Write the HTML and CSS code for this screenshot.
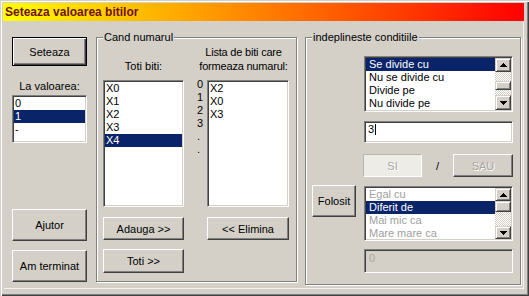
FILE: index.html
```html
<!DOCTYPE html>
<html>
<head>
<meta charset="utf-8">
<title>Seteaza valoarea bitilor</title>
<link rel="stylesheet" href="styles.css">
</head>
<body>
<div class="window">
  <div class="titlebar">Seteaza valoarea bitilor</div>
  <div class="client">
    <div class="leftcol">
      <button class="btn btn-default seteaza">Seteaza</button>
      <div class="label">La valoarea:</div>
      <div class="listbox vals">
        <div class="item">0</div>
        <div class="item sel">1</div>
        <div class="item">-</div>
      </div>
      <button class="btn ajutor">Ajutor</button>
      <button class="btn terminat">Am terminat</button>
    </div>

    <fieldset class="group group-num">
      <legend>Cand numarul</legend>
      <div class="num-grid">
        <div class="hdr hdr-all">Toti biti:</div>
        <div class="hdr hdr-list">Lista de biti care<br>formeaza numarul:</div>
        <div class="listbox bits bits-all">
          <div class="item">X0</div>
          <div class="item">X1</div>
          <div class="item">X2</div>
          <div class="item">X3</div>
          <div class="item sel">X4</div>
        </div>
        <div class="indices">0<br>1<br>2<br>3<br>.<br>.</div>
        <div class="listbox bits bits-sel">
          <div class="item">X2</div>
          <div class="item">X0</div>
          <div class="item">X3</div>
        </div>
        <button class="btn row-btn adauga">Adauga &gt;&gt;</button>
        <button class="btn row-btn elimina">&lt;&lt; Elimina</button>
        <button class="btn toti">Toti &gt;&gt;</button>
      </div>
    </fieldset>

    <fieldset class="group group-cond">
      <legend>indeplineste conditiile</legend>
      <div class="cond-grid">
        <div class="listbox scrolled list-div">
          <div class="items">
            <div class="item sel">Se divide cu</div>
            <div class="item">Nu se divide cu</div>
            <div class="item">Divide pe</div>
            <div class="item">Nu divide pe</div>
          </div>
          <div class="scrollbar sb1">
            <div class="sb-btn sb-up"><svg width="7" height="4" viewBox="0 0 7 4" shape-rendering="crispEdges"><path d="M3 0h1v1h1v1h1v1h1v1H0V3h1V2h1V1h1z"/></svg></div>
            <div class="sb-track t1"></div>
            <div class="sb-thumb th1"></div>
            <div class="sb-track t2"></div>
            <div class="sb-btn sb-down"><svg width="7" height="4" viewBox="0 0 7 4" shape-rendering="crispEdges"><path d="M0 0h7v1H6v1H5v1H4v1H3V3H2V2H1V1H0z"/></svg></div>
          </div>
        </div>
        <div class="field field-val">3<span class="caret"></span></div>
        <div class="logic">
          <button class="btn btn-toggle si" disabled>SI</button>
          <span class="slash">/</span>
          <button class="btn sau" disabled>SAU</button>
        </div>
        <button class="btn folosit">Folosit</button>
        <div class="listbox scrolled list-cmp">
          <div class="items">
            <div class="item dim">Egal cu</div>
            <div class="item sel">Diferit de</div>
            <div class="item dim">Mai mic ca</div>
            <div class="item dim">Mare mare ca</div>
          </div>
          <div class="scrollbar sb2">
            <div class="sb-btn sb-up s2"><svg width="7" height="4" viewBox="0 0 7 4" shape-rendering="crispEdges"><path d="M3 0h1v1h1v1h1v1h1v1H0V3h1V2h1V1h1z"/></svg></div>
            <div class="sb-thumb th2"></div>
            <div class="sb-track t3"></div>
            <div class="sb-btn sb-down s2"><svg width="7" height="4" viewBox="0 0 7 4" shape-rendering="crispEdges"><path d="M0 0h7v1H6v1H5v1H4v1H3V3H2V2H1V1H0z"/></svg></div>
          </div>
        </div>
        <div class="field field-disabled">0</div>
      </div>
    </fieldset>
  </div>
</div>
</body>
</html>
```

FILE: styles.css
```css
* { box-sizing: border-box; }
html, body { margin: 0; padding: 0; }
body {
  width: 529px;
  height: 296px;
  overflow: hidden;
  background: #d4d0c8;
  font-family: "Liberation Sans", Arial, sans-serif;
  font-size: 11px;
  color: #000;
}

.window {
  width: 529px;
  height: 296px;
  padding: 3px 5px 0 3px;
  background: #d4d0c8;
  box-shadow: inset 1px 1px 0 #d4d0c8, inset 2px 2px 0 #ffffff,
              inset -1px -1px 0 #404040, inset -2px -2px 0 #808080;
}

.titlebar {
  height: 18px;
  line-height: 18px;
  padding-left: 2px;
  font-size: 12px;
  font-weight: bold;
  color: #6e1200;
  white-space: nowrap;
  background: linear-gradient(to right, #ffff00, #ff0000);
}

.client {
  display: flex;
  align-items: flex-start;
  width: 520px;
  height: 267px;
  padding-left: 9px;
  box-shadow: 1px 1px 0 #f4f3f0;
}

/* ---------- buttons ---------- */
.btn {
  display: flex;
  align-items: center;
  justify-content: center;
  margin: 0;
  padding: 0;
  font: inherit;
  color: #000;
  background: #d4d0c8;
  border: 1px solid;
  border-color: #ffffff #404040 #404040 #ffffff;
  box-shadow: inset -1px -1px 0 #808080;
  border-radius: 0;
  white-space: nowrap;
}
.btn-default {
  border-color: #000;
  box-shadow: inset 1px 1px 0 #ffffff, inset -1px -1px 0 #404040, inset -2px -2px 0 #808080;
}
.btn:disabled {
  color: #a9a6a0;
  text-shadow: 1px 1px 0 #ffffff;
}
.btn-toggle {
  background: #eeece7;
  border-color: #b8b5ae #ffffff #ffffff #b8b5ae;
  box-shadow: none;
}

/* ---------- left column ---------- */
.leftcol {
  width: 75px;
  display: flex;
  flex-direction: column;
}
.seteaza { margin-top: 16px; height: 29px; }
.label {
  margin-top: 14px;
  height: 13px;
  line-height: 13px;
  text-align: center;
}
.vals { margin-top: 2px; height: 48px; }
.ajutor { margin-top: 66px; height: 32px; }
.terminat { margin-top: 9px; height: 32px; }

/* ---------- list boxes ---------- */
.listbox {
  background: #ffffff;
  border: 1px solid;
  border-color: #808080 #ffffff #ffffff #808080;
  box-shadow: inset 1px 1px 0 #404040, inset -1px -1px 0 #d4d0c8;
  padding: 1px;
  overflow: hidden;
}
.item {
  height: 13px;
  line-height: 13px;
  padding-left: 1px;
  white-space: nowrap;
}
.item.sel { background: #0a246a; color: #ffffff; }
.item.dim { color: #a0a0a0; }

/* ---------- group boxes ---------- */
.group {
  margin: 9px 0 0 0;
  padding: 0 7px 0 6px;
  min-width: 0;
  border: 1px solid #808080;
  box-shadow: inset 1px 1px 0 #ffffff, 1px 1px 0 #ffffff;
}
.group legend {
  margin: 0;
  padding: 0 1px;
  line-height: 15px;
  background: #d4d0c8;
}
.group-num { margin-left: 9px; width: 201px; height: 252px; }
.group-cond { margin-left: 8px; width: 216px; height: 255px; }

/* middle group */
.num-grid {
  display: grid;
  grid-template-columns: 81px 23px 82px;
  grid-template-rows: 35px 127px auto auto;
}
.hdr {
  align-self: end;
  padding-bottom: 7px;
  line-height: 14px;
  text-align: center;
  white-space: nowrap;
}
.hdr-all { grid-column: 1; grid-row: 1; }
.hdr-list { grid-column: 2 / 4; grid-row: 1; padding-left: 14px; letter-spacing: -0.2px; }
.bits-all { grid-column: 1; grid-row: 2; }
.bits-sel { grid-column: 3; grid-row: 2; }
.indices {
  grid-column: 2;
  grid-row: 2;
  align-self: start;
  margin-top: -2px;
  padding-left: 13px;
  line-height: 13px;
}
.row-btn { margin-top: 10px; height: 23px; grid-row: 3; }
.adauga { grid-column: 1; }
.elimina { grid-column: 3; }
.toti { grid-column: 1; grid-row: 4; margin-top: 9px; height: 24px; }

/* right group */
.cond-grid {
  display: grid;
  grid-template-columns: 44px 149px;
  column-gap: 8px;
}
.list-div { grid-column: 2; grid-row: 1; margin-top: 11px; height: 56px; }
.field-val { grid-column: 2; grid-row: 2; margin-top: 9px; height: 22px; }
.logic {
  grid-column: 2;
  grid-row: 3;
  margin-top: 11px;
  margin-left: -1px;
  height: 23px;
  display: flex;
  align-items: center;
}
.folosit { grid-column: 1; grid-row: 4; align-self: start; margin-top: 8px; height: 32px; }
.list-cmp { grid-column: 2; grid-row: 4; margin-top: 9px; height: 55px; }
.field-disabled { grid-column: 2; grid-row: 5; margin-top: 8px; height: 24px; }

.si { width: 59px; height: 23px; }
.sau { width: 60px; height: 23px; }
.slash { flex: 1; text-align: center; padding-top: 1px; }

.scrolled { display: flex; padding: 1px; }
.scrolled .items { flex: 1; min-width: 0; }
.scrolled .item { padding-left: 3px; }

.scrollbar {
  width: 16px;
  display: flex;
  flex-direction: column;
}
.sb-btn, .sb-thumb {
  background: #d4d0c8;
  border: 1px solid;
  border-color: #d4d0c8 #404040 #404040 #d4d0c8;
  box-shadow: inset 1px 1px 0 #ffffff, inset -1px -1px 0 #808080;
}
.sb-btn {
  display: flex;
  align-items: center;
  justify-content: center;
}
.sb-btn svg { display: block; fill: #000; }
.sb-track {
  background: repeating-conic-gradient(#d4d0c8 0 25%, #ffffff 0 50%) 0 0 / 2px 2px;
}
.sb1 .sb-up { height: 14px; }
.sb1 .sb-down { height: 15px; }
.t1 { height: 9px; }
.th1 { height: 9px; }
.t2 { height: 5px; }
.sb2 .sb-up { height: 13px; }
.sb2 .sb-down { height: 13px; }
.th2 { height: 11px; }
.t3 { height: 14px; }

/* text fields */
.field {
  background: #ffffff;
  border: 1px solid;
  border-color: #808080 #ffffff #ffffff #808080;
  box-shadow: inset 1px 1px 0 #404040, inset -1px -1px 0 #d4d0c8;
  padding: 1px 3px;
  line-height: 13px;
  white-space: nowrap;
}
.field-disabled {
  background: #d4d0c8;
  color: #a9a6a0;
  padding: 2px 4px;
}
.caret {
  display: inline-block;
  width: 1px;
  height: 11px;
  margin-left: 1px;
  background: #000;
  vertical-align: -2px;
}
```
